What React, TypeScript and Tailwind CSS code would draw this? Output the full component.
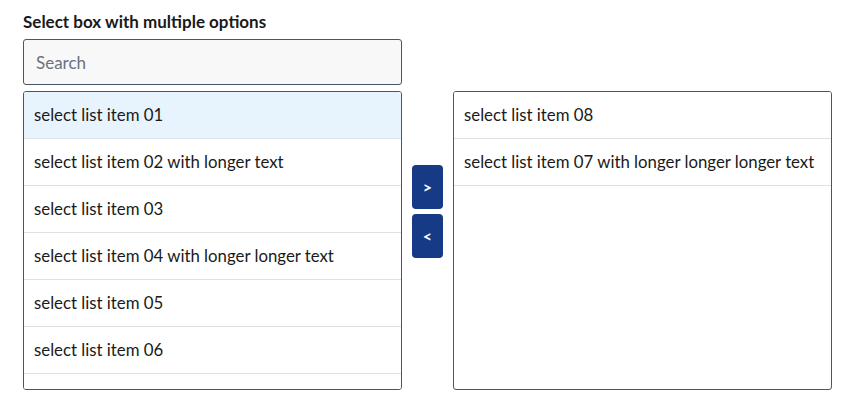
const leftItems = [
  "select list item 01",
  "select list item 02 with longer text",
  "select list item 03",
  "select list item 04 with longer longer text",
  "select list item 05",
  "select list item 06",
  "select list item 09",
];

const rightItems = ["select list item 08", "select list item 07 with longer longer longer text"];

function ListBox({ items, active }: { items: string[]; active?: number }) {
  return (
    <div className="w-[379px] h-[299px] border border-[#4b5563] rounded-[3px] overflow-hidden bg-white">
      {items.map((item, idx) => (
        <div
          key={idx}
          className={`h-[47px] flex items-center px-[10px] border-b border-[#dde0e4] text-[16.8px] text-[#1a1a1a] whitespace-nowrap ${
            idx === active ? "bg-[#e8f4fd]" : "bg-white"
          }`}
        >
          {item}
        </div>
      ))}
    </div>
  );
}

export default function App() {
  return (
    <div className="w-[853px] h-[409px] bg-white pl-[23px] pt-[11px]" style={{ fontFamily: 'Lato, "Noto Sans", sans-serif' }}>
      <h2 className="text-[17px] font-bold text-[#1a1a1a] leading-[22px] mb-[6px]">Select box with multiple options</h2>
      <input
        placeholder="Search"
        className="w-[379px] h-[46px] border border-[#4b5563] rounded-[3px] bg-[#f8f8f8] px-[12px] text-[17px] placeholder:text-[#6b7280] outline-none"
      />
      <div className="flex mt-[6px]">
        <ListBox items={leftItems} active={0} />
        <div className="flex flex-col gap-[5px] pt-[74px] mx-[10px]">
          <button className="w-[31px] h-[44px] bg-[#173a86] rounded-[4px] text-white text-[16px] font-bold">&gt;</button>
          <button className="w-[31px] h-[44px] bg-[#173a86] rounded-[4px] text-white text-[16px] font-bold">&lt;</button>
        </div>
        <ListBox items={rightItems} />
      </div>
    </div>
  );
}
